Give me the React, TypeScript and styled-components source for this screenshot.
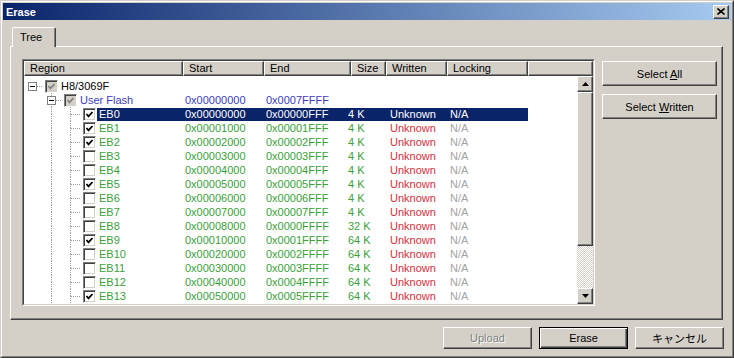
import React from "react"
import styled, { createGlobalStyle, css } from "styled-components"

const GlobalStyle = createGlobalStyle`
  html, body {
    margin: 0;
    padding: 0;
    background: #d4d0c8;
  }
  body {
    font-family: "Liberation Sans", Arial, sans-serif;
    font-size: 11px;
  }
`

const raised = css`
  box-sizing: border-box;
  border: 1px solid;
  border-color: #fff #404040 #404040 #fff;
  box-shadow: inset -1px -1px #808080;
  background: #d4d0c8;
`

const Window = styled.div`
  width: 734px;
  height: 358px;
  box-sizing: border-box;
  border: 1px solid;
  border-color: #d4d0c8 #404040 #404040 #d4d0c8;
  background: #d4d0c8;
  display: flex;
`

const Frame = styled.div`
  flex: 1;
  border: 1px solid;
  border-color: #fff #808080 #808080 #fff;
  padding: 1px;
  display: flex;
  flex-direction: column;
`

const TitleBar = styled.div`
  height: 17px;
  display: flex;
  align-items: center;
  justify-content: space-between;
  padding: 0 2px 0 2px;
  background: linear-gradient(to right, #0a246a, #a6caf0);
`

const Title = styled.span`
  color: #fff;
  font-weight: bold;
  font-size: 11px;
  padding-left: 1px;
`

const CloseButton = styled.div`
  ${raised};
  width: 16px;
  height: 14px;
  display: flex;
  align-items: center;
  justify-content: center;
`

const Content = styled.div`
  display: flex;
  flex-direction: column;
  padding: 7px 8px 0 7px;
`

const TabStrip = styled.div`
  display: flex;
  padding-left: 2px;
`

const Tab = styled.div`
  position: relative;
  z-index: 1;
  width: 44px;
  height: 20px;
  box-sizing: border-box;
  margin-bottom: -1px;
  padding: 3px 0 0 7px;
  background: #d4d0c8;
  border: 1px solid;
  border-bottom: none;
  border-color: #fff #404040 transparent #fff;
  border-radius: 2px 2px 0 0;
  box-shadow: inset -1px 0 #808080;
  color: #000;
`

const Panel = styled.div`
  height: 274px;
  box-sizing: border-box;
  border: 1px solid;
  border-color: #fff #404040 #404040 #fff;
  box-shadow: inset -1px -1px #808080;
  padding: 12px 4px 0 11px;
  display: flex;
  gap: 7px;
`

const ListOuter = styled.div`
  width: 573px;
  height: 247px;
  box-sizing: border-box;
  border: 1px solid;
  border-color: #808080 #fff #fff #808080;
  display: flex;
`

const ListInner = styled.div`
  flex: 1;
  border: 1px solid;
  border-color: #404040 #d4d0c8 #d4d0c8 #404040;
  background: #fff;
  display: flex;
  flex-direction: column;
  overflow: hidden;
`

const Header = styled.div`
  display: flex;
  height: 15px;
  flex-shrink: 0;
`

const HeaderCell = styled.div<{ $w?: number }>`
  ${raised};
  ${(p) => (p.$w ? `width: ${p.$w}px;` : "flex: 1;")}
  height: 15px;
  padding-left: 5px;
  line-height: 13px;
  color: #000;
  white-space: nowrap;
  overflow: hidden;
`

const ListBody = styled.div`
  flex: 1;
  display: flex;
  min-height: 0;
`

const Rows = styled.div`
  flex: 1;
  padding-top: 3px;
  overflow: hidden;
`

const Row = styled.div`
  display: flex;
  align-items: center;
  width: 504px;
  height: 14px;
`

const CheckSlot = styled.div`
  width: 16px;
  height: 14px;
  display: flex;
  align-items: center;
  flex-shrink: 0;
`

const CheckBox = styled.div<{ $disabled?: boolean }>`
  width: 13px;
  height: 13px;
  box-sizing: border-box;
  margin-left: 2px;
  border: 1px solid;
  border-color: #808080 #fff #fff #808080;
  box-shadow: inset 1px 1px #404040, inset -1px -1px #d4d0c8;
  background: ${(p) => (p.$disabled ? "#d4d0c8" : "#fff")};
  display: flex;
  align-items: center;
  justify-content: center;
`

const Item = styled.div<{ $selected?: boolean }>`
  flex: 1;
  display: flex;
  height: 13px;
  line-height: 13px;
  background: ${(p) => (p.$selected ? "#0a246a" : "transparent")};
  white-space: nowrap;
`

const tones = {
  black: "#000",
  blue: "#3c3cbc",
  green: "#3aa03a",
  red: "#d4303c",
  gray: "#a4a4a4",
}

type Tone = keyof typeof tones

const Cell = styled.div<{ $w?: number; $tone: Tone; $selected?: boolean }>`
  ${(p) => (p.$w ? `width: ${p.$w}px;` : "flex: 1; padding-left: 2px;")}
  color: ${(p) => (p.$selected ? "#fff" : tones[p.$tone])};
  overflow: hidden;
`

const ScrollBar = styled.div`
  width: 16px;
  display: flex;
  flex-direction: column;
`

const ScrollButton = styled.div`
  ${raised};
  width: 16px;
  height: 16px;
  display: flex;
  align-items: center;
  justify-content: center;
`

const Thumb = styled.div`
  ${raised};
  height: 154px;
`

const Track = styled.div`
  flex: 1;
  background-color: #d4d0c8;
  background-image: conic-gradient(#fff 25%, transparent 0 50%, #fff 0 75%, transparent 0);
  background-size: 2px 2px;
`

const SideButtons = styled.div`
  width: 115px;
  display: flex;
  flex-direction: column;
  gap: 8px;
  margin-top: 2px;
`

const Button = styled.div<{ $h?: number; $w?: number; $default?: boolean; $disabled?: boolean }>`
  ${raised};
  height: ${(p) => p.$h ?? 25}px;
  ${(p) => (p.$w ? `width: ${p.$w}px;` : "")}
  display: flex;
  align-items: center;
  justify-content: center;
  color: ${(p) => (p.$disabled ? "#808080" : "#000")};
  ${(p) => (p.$disabled ? "text-shadow: 1px 1px #fff;" : "")}
  font-family: "Liberation Sans", "Noto Sans CJK JP", sans-serif;
  ${(p) =>
    p.$default
      ? `border-color: #000; box-shadow: inset 1px 1px #fff, inset -1px -1px #404040, inset -2px -2px #808080;`
      : ""}
`

const Key = styled.span`
  text-decoration: underline;
`

const BottomRow = styled.div`
  display: flex;
  justify-content: flex-end;
  gap: 7px;
  margin-top: 7px;
  margin-right: -1px;
`

type SlotKind = { expander?: boolean; up?: boolean; down?: boolean; right?: boolean }

function Slot({ expander, up, down, right }: SlotKind) {
  const dot = { stroke: "#a0a0a0", strokeWidth: 1, strokeDasharray: "1 1" }
  return (
    <svg width="19" height="14" style={{ flexShrink: 0, display: "block" }}>
      {up && <line x1="8.5" y1="0" x2="8.5" y2="7" {...dot} />}
      {down && <line x1="8.5" y1="7" x2="8.5" y2="14" {...dot} />}
      {right && <line x1="9" y1="7.5" x2="19" y2="7.5" {...dot} />}
      {expander && (
        <>
          <rect x="4.5" y="3.5" width="8" height="8" fill="#fff" stroke="#808080" />
          <line x1="6" y1="7.5" x2="11" y2="7.5" stroke="#000" />
        </>
      )}
    </svg>
  )
}

function Check({ checked, disabled }: { checked: boolean; disabled?: boolean }) {
  return (
    <CheckBox $disabled={disabled}>
      {checked && (
        <svg width="9" height="9" viewBox="0 0 9 9">
          <polyline points="1.5,4 3.5,6.3 7.5,2" fill="none" stroke={disabled ? "#808080" : "#000"} strokeWidth="1.8" />
        </svg>
      )}
    </CheckBox>
  )
}

type Node = {
  label: string
  level: number
  checked: boolean
  disabled?: boolean
  selected?: boolean
  tone: Tone
  start?: string
  end?: string
  size?: string
}

const blocks: [string, string, string, string, boolean][] = [
  ["EB0", "0x00000000", "0x00000FFF", "4 K", true],
  ["EB1", "0x00001000", "0x00001FFF", "4 K", true],
  ["EB2", "0x00002000", "0x00002FFF", "4 K", true],
  ["EB3", "0x00003000", "0x00003FFF", "4 K", false],
  ["EB4", "0x00004000", "0x00004FFF", "4 K", false],
  ["EB5", "0x00005000", "0x00005FFF", "4 K", true],
  ["EB6", "0x00006000", "0x00006FFF", "4 K", false],
  ["EB7", "0x00007000", "0x00007FFF", "4 K", false],
  ["EB8", "0x00008000", "0x0000FFFF", "32 K", false],
  ["EB9", "0x00010000", "0x0001FFFF", "64 K", true],
  ["EB10", "0x00020000", "0x0002FFFF", "64 K", false],
  ["EB11", "0x00030000", "0x0003FFFF", "64 K", false],
  ["EB12", "0x00040000", "0x0004FFFF", "64 K", false],
  ["EB13", "0x00050000", "0x0005FFFF", "64 K", true],
]

const nodes: Node[] = [
  { label: "H8/3069F", level: 0, checked: true, disabled: true, tone: "black" },
  { label: "User Flash", level: 1, checked: true, disabled: true, tone: "blue", start: "0x00000000", end: "0x0007FFFF" },
  ...blocks.map(([label, start, end, size, checked], i) => ({
    label,
    level: 2,
    checked,
    selected: i === 0,
    tone: "green" as Tone,
    start,
    end,
    size,
  })),
]

function slotsFor(level: number): SlotKind[] {
  if (level === 0) return [{ expander: true, right: true }]
  if (level === 1) return [{}, { expander: true, up: true, down: true, right: true }]
  return [{}, { up: true, down: true }, { up: true, down: true, right: true }]
}

function TreeRow({ node }: { node: Node }) {
  const leaf = node.level === 2
  const sel = node.selected
  return (
    <Row>
      {slotsFor(node.level).map((s, i) => (
        <Slot key={i} {...s} />
      ))}
      <CheckSlot>
        <Check checked={node.checked} disabled={node.disabled} />
      </CheckSlot>
      <Item $selected={sel}>
        <Cell $tone={node.tone} $selected={sel}>{node.label}</Cell>
        <Cell $w={81} $tone={node.tone} $selected={sel}>{node.start}</Cell>
        <Cell $w={82} $tone={node.tone} $selected={sel}>{node.end}</Cell>
        <Cell $w={42} $tone={node.tone} $selected={sel}>{node.size}</Cell>
        <Cell $w={60} $tone="red" $selected={sel}>{leaf ? "Unknown" : ""}</Cell>
        <Cell $w={78} $tone="gray" $selected={sel}>{leaf ? "N/A" : ""}</Cell>
      </Item>
    </Row>
  )
}

const columns: [string, number][] = [
  ["Region", 159],
  ["Start", 81],
  ["End", 87],
  ["Size", 35],
  ["Written", 61],
  ["Locking", 81],
]

export default function App() {
  return (
    <>
      <GlobalStyle />
      <Window>
        <Frame>
          <TitleBar>
            <Title>Erase</Title>
            <CloseButton>
              <svg width="8" height="7" viewBox="0 0 8 7">
                <path d="M0.5 0.5 L7.5 6.5 M7.5 0.5 L0.5 6.5" stroke="#000" strokeWidth="1.6" />
              </svg>
            </CloseButton>
          </TitleBar>
          <Content>
            <TabStrip>
              <Tab>Tree</Tab>
            </TabStrip>
            <Panel>
              <ListOuter>
                <ListInner>
                  <Header>
                    {columns.map(([name, w]) => (
                      <HeaderCell key={name} $w={w}>{name}</HeaderCell>
                    ))}
                    <HeaderCell />
                  </Header>
                  <ListBody>
                    <Rows>
                      {nodes.map((n) => (
                        <TreeRow key={n.label} node={n} />
                      ))}
                    </Rows>
                    <ScrollBar>
                      <ScrollButton>
                        <svg width="7" height="4" viewBox="0 0 7 4">
                          <path d="M3.5 0 L7 4 L0 4 Z" fill="#000" />
                        </svg>
                      </ScrollButton>
                      <Thumb />
                      <Track />
                      <ScrollButton>
                        <svg width="7" height="4" viewBox="0 0 7 4">
                          <path d="M0 0 L7 0 L3.5 4 Z" fill="#000" />
                        </svg>
                      </ScrollButton>
                    </ScrollBar>
                  </ListBody>
                </ListInner>
              </ListOuter>
              <SideButtons>
                <Button>
                  <span>Select <Key>A</Key>ll</span>
                </Button>
                <Button>
                  <span>Select <Key>W</Key>ritten</span>
                </Button>
              </SideButtons>
            </Panel>
            <BottomRow>
              <Button $w={89} $h={22} $disabled>Upload</Button>
              <Button $w={89} $h={22} $default>Erase</Button>
              <Button $w={89} $h={22}>キャンセル</Button>
            </BottomRow>
          </Content>
        </Frame>
      </Window>
    </>
  )
}
